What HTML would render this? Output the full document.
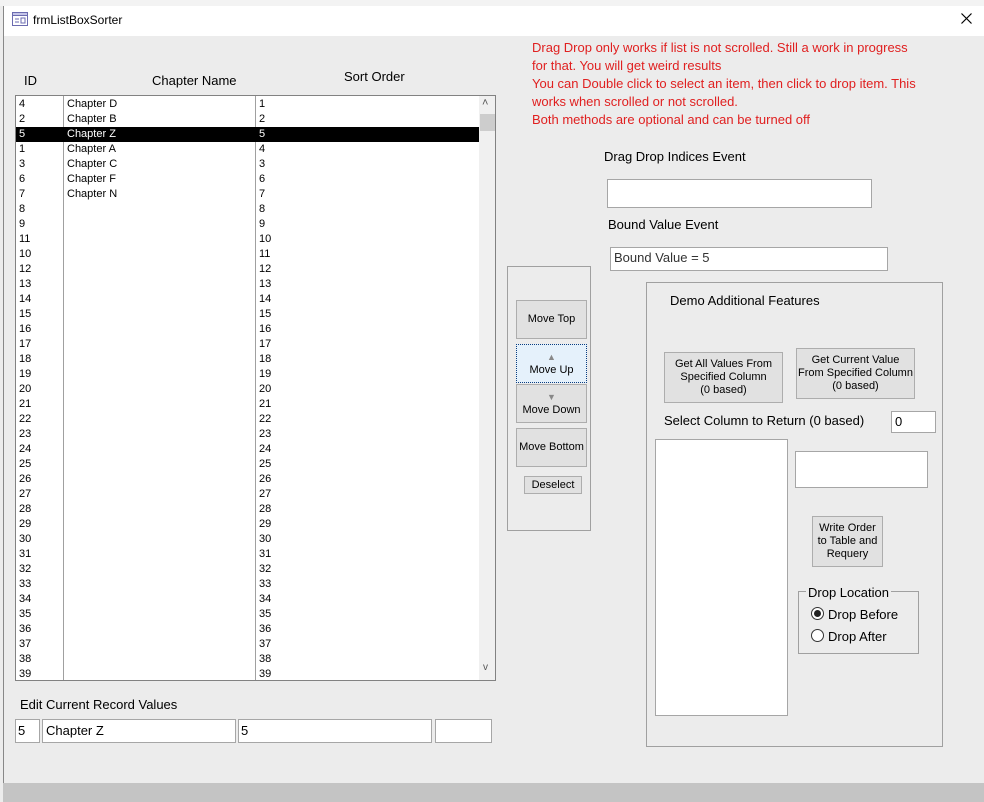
<!DOCTYPE html>
<html><head><meta charset="utf-8"><style>
*{margin:0;padding:0;box-sizing:border-box}
body{width:984px;height:802px;overflow:hidden;background:#ececec;font-family:"Liberation Sans",sans-serif;position:relative;color:#000}
.a{position:absolute}
.tb{background:#fff;border:1px solid #a6a6a6}
.btn{position:absolute;background:#e1e1e1;border:1px solid #adadad;font-size:11px;text-align:center;display:flex;align-items:center;justify-content:center;line-height:13px}
.row{height:15px;font-size:11px;line-height:15px;position:relative;white-space:nowrap}
.row span{position:absolute;top:0}
.red{color:#e02020;font-size:13px;line-height:18px}
.lbl{font-size:13px}
.rad{position:absolute;width:13px;height:13px;border:1px solid #333;border-radius:50%;background:#fff}
</style></head><body>
<div class="a" style="left:0;top:0;width:984px;height:6px;background:#f3f3f3"></div>
<div class="a" style="top:6px;left:3px;width:981px;height:30px;background:#fff"></div>
<div class="a" style="left:3px;top:6px;width:1px;height:780px;background:#888"></div>
<svg class="a" style="left:12px;top:12px" width="16" height="14"><rect x="0.5" y="0.5" width="15" height="13" fill="#fff" stroke="#6b6bb0"/><rect x="0.5" y="0.5" width="15" height="3" fill="#c5c5e8" stroke="#6b6bb0"/><line x1="3" y1="7" x2="7" y2="7" stroke="#6b6bb0"/><line x1="3" y1="10" x2="7" y2="10" stroke="#6b6bb0"/><rect x="9" y="6" width="4" height="5" fill="none" stroke="#6b6bb0"/></svg>
<div class="a" style="left:33px;top:13px;font-size:12px">frmListBoxSorter</div>
<svg class="a" style="left:961px;top:13px" width="11" height="11"><path d="M0.5 0.5L10.5 10.5M10.5 0.5L0.5 10.5" stroke="#000" stroke-width="1.2"/></svg>

<div class="a lbl" style="left:24px;top:73px">ID</div>
<div class="a lbl" style="left:152px;top:73px">Chapter Name</div>
<div class="a lbl" style="left:344px;top:69px">Sort Order</div>

<div class="a tb" style="left:15px;top:95px;width:481px;height:586px;border-color:#828282;overflow:hidden">
<div class="a" style="left:47px;top:0;width:1px;height:586px;background:#a0a0a0"></div>
<div class="a" style="left:239px;top:0;width:1px;height:586px;background:#a0a0a0"></div>
<div class="a" style="left:463px;top:0;width:17px;height:586px;background:#f0f0f0"></div>
<div class="a" style="left:464px;top:18px;width:15px;height:17px;background:#cdcdcd"></div>
<div class="a" style="left:466px;top:1px;font-size:11px;color:#555">˄</div>
<div class="a" style="left:467px;top:566px;font-size:10px;color:#555">v</div>
<div class="a" style="left:0;top:1px;width:463px" id="L"></div>
</div>

<div class="a red" style="left:532px;top:39px;width:392px">Drag Drop only works if list is not scrolled. Still a work in progress for that. You will get weird results<br>You can Double click to select an item, then click to drop item. This works when scrolled or not scrolled.<br>Both methods are optional and can be turned off</div>

<div class="a lbl" style="left:604px;top:149px">Drag Drop Indices Event</div>
<div class="a tb" style="left:607px;top:179px;width:265px;height:29px"></div>
<div class="a lbl" style="left:608px;top:217px">Bound Value Event</div>
<div class="a tb" style="left:610px;top:247px;width:278px;height:24px;font-size:13px;padding:2px 3px;color:#333">Bound Value = 5</div>

<div class="a" style="left:507px;top:266px;width:84px;height:265px;border:1px solid #a0a0a0"></div>
<div class="btn" style="left:516px;top:300px;width:71px;height:39px">Move Top</div>
<div class="btn" style="left:516px;top:344px;width:71px;height:39px;background:#e5f1fb;border:1px dotted #0a3d80;flex-direction:column"><span style="color:#888;font-size:9px">▲</span>Move Up</div>
<div class="btn" style="left:516px;top:384px;width:71px;height:39px;flex-direction:column"><span style="color:#888;font-size:9px">▼</span>Move Down</div>
<div class="btn" style="left:516px;top:428px;width:71px;height:39px">Move Bottom</div>
<div class="btn" style="left:524px;top:476px;width:58px;height:18px">Deselect</div>

<div class="a" style="left:646px;top:282px;width:297px;height:465px;border:1px solid #a0a0a0"></div>
<div class="a lbl" style="left:670px;top:293px">Demo Additional Features</div>
<div class="btn" style="left:664px;top:352px;width:119px;height:51px">Get All Values From<br>Specified Column<br>(0 based)</div>
<div class="btn" style="left:796px;top:348px;width:119px;height:51px">Get Current Value<br>From Specified Column<br>(0 based)</div>
<div class="a lbl" style="left:664px;top:413px">Select Column to Return (0 based)</div>
<div class="a tb" style="left:891px;top:411px;width:45px;height:22px;font-size:13px;padding:2px 3px">0</div>
<div class="a tb" style="left:655px;top:439px;width:133px;height:277px"></div>
<div class="a tb" style="left:795px;top:451px;width:133px;height:37px"></div>
<div class="btn" style="left:812px;top:516px;width:71px;height:51px">Write Order<br>to Table and<br>Requery</div>
<div class="a" style="left:798px;top:591px;width:121px;height:63px;border:1px solid #a0a0a0"></div>
<div class="a lbl" style="left:806px;top:585px;background:#ececec;padding:0 2px">Drop Location</div>
<div class="rad" style="left:811px;top:607px"><div style="position:absolute;left:2px;top:2px;width:7px;height:7px;border-radius:50%;background:#222"></div></div>
<div class="a lbl" style="left:828px;top:607px">Drop Before</div>
<div class="rad" style="left:811px;top:629px"></div>
<div class="a lbl" style="left:828px;top:629px">Drop After</div>

<div class="a lbl" style="left:20px;top:697px">Edit Current Record Values</div>
<div class="a tb" style="left:15px;top:719px;width:25px;height:24px;font-size:13px;padding:3px 2px">5</div>
<div class="a tb" style="left:42px;top:719px;width:194px;height:24px;font-size:13px;padding:3px 3px">Chapter Z</div>
<div class="a tb" style="left:238px;top:719px;width:194px;height:24px;font-size:13px;padding:3px 2px">5</div>
<div class="a tb" style="left:435px;top:719px;width:57px;height:24px"></div>

<div class="a" style="left:3px;top:783px;width:981px;height:19px;background:#c4c4c4"></div>
<script>
var ids=[4,2,5,1,3,6,7,8,9,11,10],so=[1,2,5,4,3,6,7,8,9,10,11],nm=["Chapter D","Chapter B","Chapter Z","Chapter A","Chapter C","Chapter F","Chapter N"];
for(var i=12;i<=39;i++){ids.push(i);so.push(i);}
var h="";
for(var i=0;i<39;i++){var s=i==2?' style="background:#000;color:#fff"':'';
h+='<div class="row"'+s+'><span style="left:3px">'+ids[i]+'</span><span style="left:51px">'+(nm[i]||'')+'</span><span style="left:243px">'+so[i]+'</span></div>';}
document.getElementById('L').innerHTML=h;
</script>
</body></html>
